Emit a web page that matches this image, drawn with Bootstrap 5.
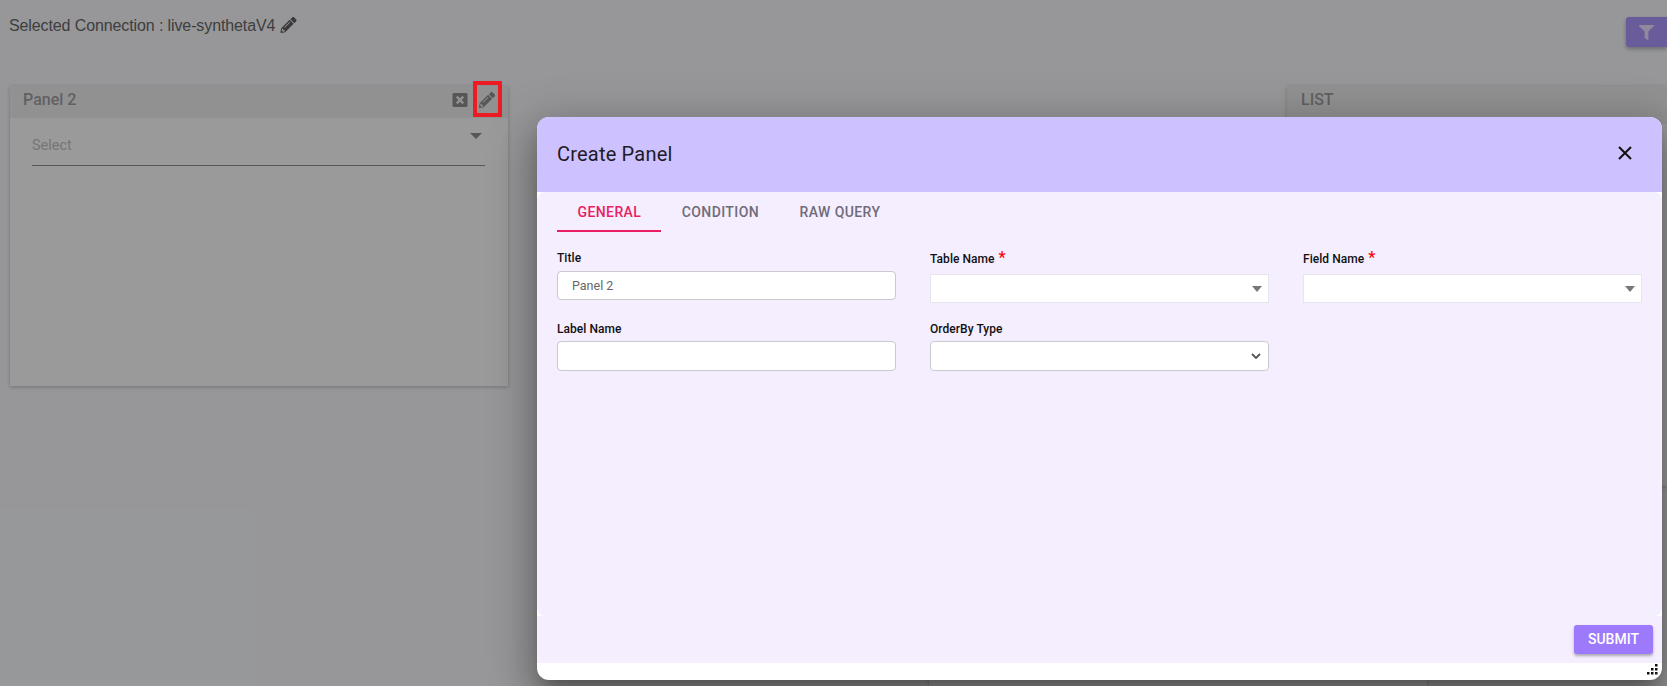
<!DOCTYPE html>
<html lang="en">
<head>
  <meta charset="UTF-8" />
  <meta name="viewport" content="width=device-width, initial-scale=1.0"/>
  <title>Create Panel</title>
  <link href="https://cdn.jsdelivr.net/npm/bootstrap@5.3.0/dist/css/bootstrap.min.css" rel="stylesheet" />
  <style>
    html, body {
      height: 686px;
      overflow: hidden;
    }
    body {
      font-family: Roboto, "Liberation Sans", sans-serif;
      background-color: #fafbfc;
      position: relative;
    }
    .top-bar {
      height: 86px;
      padding: 15.5px 0 0 9px;
      font-family: "Liberation Sans", Arial, sans-serif;
      font-size: 16px;
      letter-spacing: -.11px;
      line-height: 20px;
      color: #666;
    }
    .top-bar svg {
      width: 17px;
      height: 16px;
      fill: #606060;
      vertical-align: -2px;
    }
    .filter-btn {
      width: 41px;
      height: 30px;
      margin-top: 1.5px;
      background: #b096ff;
      border-radius: 3px 0 0 3px;
      box-shadow: 0 2px 4px rgba(0, 0, 0, .3);
    }
    .filter-btn svg {
      width: 15px;
      height: 15px;
      fill: #fff;
      opacity: .75;
    }
    .panel-box {
      position: absolute;
      top: 86px;
      left: 10px;
      width: 498px;
      height: 300px;
      background: #fff;
      box-shadow: 0 1px 4px rgba(0, 0, 0, .25);
    }
    .list-box {
      left: 1287px;
      width: 380px;
      height: 400px;
    }
    .lower-box {
      top: 500px;
      left: 929px;
      height: 186px;
    }
    .panel-head {
      height: 32px;
      padding: 0 13px 4px 13px;
      background: #f1f1f1;
      font-size: 16px;
      font-weight: 500;
      color: #a0a0a0;
    }
    .list-box .panel-head {
      height: 38px;
      padding: 0 13px 11px 14px;
    }
    .panel-head svg {
      width: 16px;
      height: 16px;
      fill: #8e8e8e;
    }
    .panel-tools {
      gap: 11px;
    }
    .fake-select {
      margin: 0 23px 0 22px;
      height: 48px;
      border-bottom: 1px solid #8e8e8e;
      color: #c4c4c4;
      font-size: 14.5px;
      position: relative;
      padding-top: 18px;
      line-height: 20px;
    }
    .fake-select::after {
      content: "";
      position: absolute;
      top: 15px;
      right: 3px;
      border-left: 6.5px solid transparent;
      border-right: 6.5px solid transparent;
      border-top: 6px solid #8e8e8e;
    }
    .dim-layer {
      position: absolute;
      inset: 0;
      background: rgba(2, 3, 6, .4);
    }
    .red-mark {
      position: absolute;
      top: 81px;
      left: 473px;
      width: 29px;
      height: 36px;
      border: 4px solid #ed1c24;
    }
    .panel-dialog {
      position: absolute;
      top: 117px;
      left: 537px;
      width: 1125px;
      height: 563px;
      background: #fff;
      border-radius: 12px;
      box-shadow: 0 11px 15px -7px rgba(0, 0, 0, .25), 0 24px 38px 3px rgba(0, 0, 0, .2), 0 9px 46px 8px rgba(0, 0, 0, .18);
      overflow: hidden;
    }
    .dialog-head {
      height: 75px;
      padding: 0 30px 3px 20px;
      background: #cdc1ff;
      font-size: 20px;
      letter-spacing: .2px;
      color: #1d1b26;
    }
    .dialog-head span {
      margin-top: 2px;
    }
    .dialog-head svg {
      width: 14px;
      height: 14px;
      stroke: #111;
      stroke-width: 2;
    }
    .dialog-body {
      height: 424px;
      padding: 0 20px;
      background: #f5eeff;
      border-radius: 8px;
    }
    .tab-row {
      height: 40px;
    }
    .tab-item {
      padding: 0 20px 0 20.5px;
      line-height: 40px;
      height: 40px;
      font-size: 14px;
      font-weight: 500;
      letter-spacing: .4px;
      color: #6f6c78;
    }
    .tab-item.is-on {
      color: #e91e63;
      border-bottom: 2px solid #e91e63;
    }
    .field-row {
      --bs-gutter-x: 34px;
    }
    .field-row + .field-row {
      margin-top: 17px;
    }
    .first-row {
      padding-top: 17px;
    }
    .field-label {
      display: block;
      font-size: 12px;
      font-weight: 500;
      line-height: 18px;
      color: #111;
      letter-spacing: .05px;
      margin-bottom: 4px;
    }
    .field-label b {
      color: #f00;
      font-size: 16px;
      font-weight: 500;
      line-height: 12px;
      margin-left: 1px;
    }
    .field-input {
      height: 29px;
      padding: 0 14px;
      font-size: 12.5px;
      color: #666;
      border-color: #cbc8d0;
      border-radius: 4px;
    }
    .first-label {
      margin-top: 1px;
    }
    .field-row + .field-row .field-label {
      margin-bottom: 3px;
    }
    .field-row + .field-row .field-input {
      height: 30px;
    }
    .combo-box {
      height: 29px;
      background: #fff;
      border: 1px solid #e8e4ee;
      margin-top: 6px;
      position: relative;
    }
    .combo-box::after {
      content: "";
      position: absolute;
      top: 11px;
      right: 6px;
      border-left: 5.5px solid transparent;
      border-right: 5.5px solid transparent;
      border-top: 6px solid #777;
    }
    .order-select {
      background-image: url("data:image/svg+xml,%3csvg xmlns='http://www.w3.org/2000/svg' viewBox='0 0 10 6'%3e%3cpath fill='none' stroke='%23555' stroke-width='1.8' d='M1 1l4 4 4-4'/%3e%3c/svg%3e");
      background-position: right 7px center;
      background-size: 10px 6px;
    }
    .dialog-foot {
      height: 47px;
      padding: 9px 9px 0 0;
      background: #f5eeff;
    }
    .submit-btn {
      width: 79px;
      height: 29px;
      padding: 0;
      background: #9d79fb;
      border: 0;
      border-radius: 3px;
      color: #fff;
      font-size: 14px;
      font-weight: 500;
      box-shadow: 0 2px 3px rgba(0, 0, 0, .3);
    }
    .grip-mark {
      position: absolute;
      right: 4px;
      bottom: 5px;
      width: 12px;
      height: 12px;
      fill: #111;
    }
  </style>
</head>
<body>
  <!-- page under the dialog -->
  <div class="top-bar d-flex justify-content-between align-items-start">
    <div>Selected Connection : live-synthetaV4 <svg viewBox="0 0 512 512"><use href="#pencil" /></svg></div>
    <div class="filter-btn d-flex align-items-center justify-content-center">
      <svg viewBox="0 0 512 512"><path d="M487.976 0H24.028C2.71 0-8.047 25.866 7.058 40.971L192 225.941V432c0 7.831 3.821 15.17 10.237 19.662l80 55.98C298.02 518.69 320 507.493 320 487.98V225.941l184.947-184.97C520.021 25.896 509.338 0 487.976 0z"/></svg>
    </div>
  </div>

  <div class="panel-box">
    <div class="panel-head d-flex justify-content-between align-items-center">
      <span>Panel 2</span>
      <span class="d-flex align-items-center panel-tools">
        <svg viewBox="0 0 16 16"><path fill-rule="evenodd" d="M1.5 1h13a1 1 0 0 1 1 1v12a1 1 0 0 1-1 1h-13a1 1 0 0 1-1-1V2a1 1 0 0 1 1-1zM5.6 3.8 3.9 5.5 6.4 8l-2.5 2.5 1.7 1.7L8 9.7l2.4 2.5 1.7-1.7L9.6 8l2.5-2.5-1.7-1.7L8 6.3z"/></svg>
        <svg viewBox="0 0 512 512"><use href="#pencil" /></svg>
      </span>
    </div>
    <div class="fake-select">Select</div>
  </div>

  <div class="panel-box list-box">
    <div class="panel-head d-flex align-items-center">LIST</div>
  </div>

  <div class="panel-box lower-box"></div>

  <div class="dim-layer"></div>
  <div class="red-mark"></div>

  <!-- Create Panel dialog -->
  <div class="panel-dialog">
    <div class="dialog-head d-flex justify-content-between align-items-center">
      <span>Create Panel</span>
      <svg viewBox="0 0 14 14"><path d="M1 1l12 12M13 1L1 13"/></svg>
    </div>
    <div class="dialog-body">
      <div class="tab-row d-flex">
        <div class="tab-item is-on">GENERAL</div>
        <div class="tab-item">CONDITION</div>
        <div class="tab-item">RAW QUERY</div>
      </div>
      <div class="row field-row first-row">
        <div class="col-4">
          <label class="field-label">Title</label>
          <input class="form-control field-input" type="text" value="Panel 2">
        </div>
        <div class="col-4">
          <label class="field-label first-label">Table Name <b>*</b></label>
          <div class="combo-box"></div>
        </div>
        <div class="col-4">
          <label class="field-label first-label">Field Name <b>*</b></label>
          <div class="combo-box"></div>
        </div>
      </div>
      <div class="row field-row">
        <div class="col-4">
          <label class="field-label">Label Name</label>
          <input class="form-control field-input" type="text">
        </div>
        <div class="col-4">
          <label class="field-label">OrderBy Type</label>
          <select class="form-select field-input order-select"></select>
        </div>
      </div>
    </div>
    <div class="dialog-foot d-flex justify-content-end align-items-start">
      <button class="submit-btn" type="button">SUBMIT</button>
    </div>
    <svg class="grip-mark" viewBox="0 0 12 12">
      <rect x="9" y="1" width="2.5" height="2.5"/>
      <rect x="5" y="5" width="2.5" height="2.5"/>
      <rect x="9" y="5" width="2.5" height="2.5"/>
      <rect x="1" y="9" width="2.5" height="2.5"/>
      <rect x="5" y="9" width="2.5" height="2.5"/>
      <rect x="9" y="9" width="2.5" height="2.5"/>
    </svg>
  </div>

  <svg width="0" height="0" class="d-none">
    <defs>
      <path id="pencil" d="M497.9 142.1l-46.1 46.1c-4.7 4.7-12.3 4.7-17 0l-111-111c-4.7-4.7-4.7-12.3 0-17l46.1-46.1c18.7-18.7 49.1-18.7 67.9 0l60.1 60.1c18.8 18.7 18.8 49.1 0 67.9zM284.2 99.8L21.6 362.4.4 483.9c-2.9 16.4 11.4 30.6 27.8 27.8l121.5-21.3 262.6-262.6c4.7-4.7 4.7-12.3 0-17l-111-111c-4.8-4.7-12.4-4.7-17.1 0zM124.1 339.9c-5.5-5.5-5.5-14.3 0-19.8l154-154c5.5-5.5 14.3-5.5 19.8 0s5.5 14.3 0 19.8l-154 154c-5.5 5.5-14.3 5.5-19.8 0zM88 424h48v36.3l-64.5 11.3-31.1-31.1L51.7 376H88v48z"/>
    </defs>
  </svg>

  <script src="https://cdn.jsdelivr.net/npm/bootstrap@5.3.0/dist/js/bootstrap.bundle.min.js"></script>
</body>
</html>
